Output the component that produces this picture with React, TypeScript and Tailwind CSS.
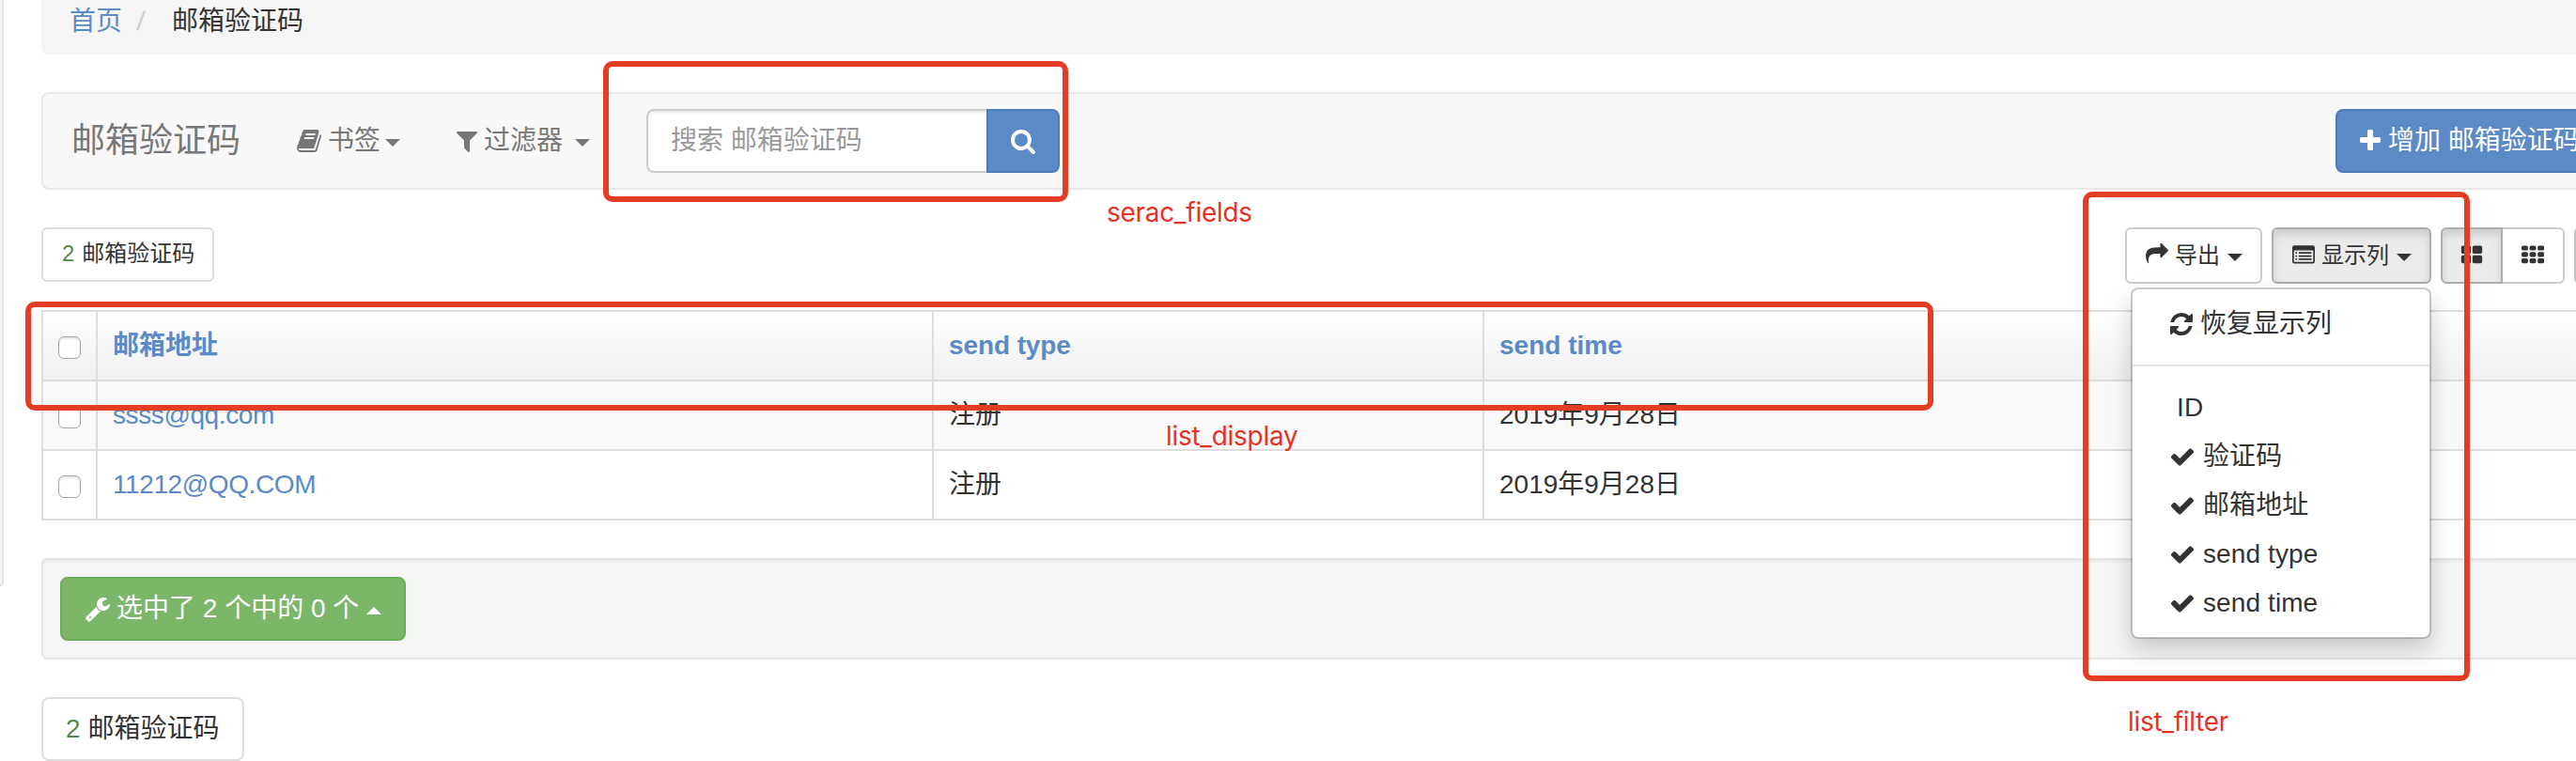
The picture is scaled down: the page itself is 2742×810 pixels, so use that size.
import React from "react";

const paths = {
  book: "M1703 478q40 57 18 129l-275 906q-19 64-76.5 107.5t-122.5 43.5h-923q-77 0-148.5-53.5t-99.5-131.5q-24-67-2-127 0-4 3-27t4-37q1-8-3-21.5t-3-19.5q2-11 8-21t16.5-23.5 16.5-23.5q23-38 45-91.5t30-91.5q3-10 .5-30t-.5-28q3-11 17-28t17-23q21-36 42-92t25-90q1-9-2.5-32t.5-28q4-13 22-30.5t22-22.5q19-26 42.5-84.5t27.5-96.5q1-8-3-25.5t-2-26.5q2-8 9-18t18-23 17-21q8-12 16.5-30.5t15-35 16-36 19.5-32 26.5-23.5 36-11.5 47.5 5.5l-1 3q38-9 51-9h761q74 0 114 56t18 130l-274 906q-36 119-71.5 153.5t-128.5 34.5h-869q-27 0-38 15-11 16-1 43 24 70 144 70h923q29 0 56-15.5t35-41.5l300-987q7-22 5-57 38 15 59 43zm-1064 2q-4 13 2 22.5t20 9.5h608q13 0 25.5-9.5t16.5-22.5l21-64q4-13-2-22.5t-20-9.5h-608q-13 0-25.5 9.5t-16.5 22.5zm-83 256q-4 13 2 22.5t20 9.5h608q13 0 25.5-9.5t16.5-22.5l21-64q4-13-2-22.5t-20-9.5h-608q-13 0-25.5 9.5t-16.5 22.5z",
  filter: "M1595 295q17 41-14 70l-493 493v742q0 42-39 59-13 5-25 5-27 0-45-19l-256-256q-19-19-19-45v-486l-493-493q-31-29-14-70 17-39 59-39h1280q42 0 59 39z",
  search: "M1216 832q0-185-131.5-316.5t-316.5-131.5-316.5 131.5-131.5 316.5 131.5 316.5 316.5 131.5 316.5-131.5 131.5-316.5zm512 832q0 52-38 90t-90 38q-54 0-90-38l-343-342q-179 124-399 124-143 0-273.5-55.5t-225-150-150-225-55.5-273.5 55.5-273.5 150-225 225-150 273.5-55.5 273.5 55.5 225 150 150 225 55.5 273.5q0 220-124 399l343 343q37 37 37 90z",
  plus: "M1600 736v192q0 40-28 68t-68 28h-416v416q0 40-28 68t-68 28h-192q-40 0-68-28t-28-68v-416h-416q-40 0-68-28t-28-68v-192q0-40 28-68t68-28h416v-416q0-40 28-68t68-28h192q40 0 68 28t28 68v416h416q40 0 68 28t28 68z",
  share: "M1792 640q0 26-19 45l-512 512q-19 19-45 19t-45-19-19-45v-256h-224q-98 0-175.5 6t-154 21.5-133 42.5-105.5 69.5-80 101-48.5 138.5-17.5 181q0 55 5 123 0 6 2.5 23.5t2.5 26.5q0 15-8.5 25t-23.5 10q-16 0-28-17-7-9-13-22t-13.5-30-10.5-24q-127-285-127-451 0-199 53-333 162-403 875-403h224v-256q0-26 19-45t45-19 45 19l512 512q19 19 19 45z",
  refresh: "M1639 1056q0 5-1 7-64 268-268 434.5t-478 166.5q-146 0-282.5-55t-243.5-157l-129 129q-19 19-45 19t-45-19-19-45v-448q0-26 19-45t45-19h448q26 0 45 19t19 45-19 45l-137 137q71 66 161 102t187 36q134 0 250-65t186-179q11-17 53-117 8-23 30-23h192q13 0 22.5 9.5t9.5 22.5zm25-800v448q0 26-19 45t-45 19h-448q-26 0-45-19t-19-45 19-45l138-138q-148-137-349-137-134 0-250 65t-186 179q-11 17-53 117-8 23-30 23h-199q-13 0-22.5-9.5t-9.5-22.5v-7q65-268 270-434.5t480-166.5q146 0 284 55.5t245 156.5l130-129q19-19 45-19t45 19 19 45z",
  check: "M1671 566q0 40-28 68l-724 724-136 136q-28 28-68 28t-68-28l-136-136-362-362q-28-28-28-68t28-68l136-136q28-28 68-28t68 28l294 295 656-657q28-28 68-28t68 28l136 136q28 28 28 68z",
  wrench: "M448 1472q0-26-19-45t-45-19-45 19-19 45 19 45 45 19 45-19 19-45zm644-420l-682 682q-37 37-90 37-52 0-91-37l-106-108q-38-36-38-90 0-53 38-91l681-681q39 98 114.5 173.5t173.5 114.5zm634-435q0 39-23 106-47 134-164.5 217.5t-258.5 83.5q-185 0-316.5-131.5t-131.5-316.5 131.5-316.5 316.5-131.5q58 0 121.5 16.5t107.5 46.5q16 11 16 28t-16 28l-293 169v224l193 107q5-3 79-48.5t135.5-81 70.5-35.5q15 0 23.5 10t8.5 25z",
};

type IconName = keyof typeof paths;

function Icon({ name, className = "h-7 w-7" }: { name: IconName; className?: string }) {
  return (
    <svg viewBox="0 0 1792 1792" fill="currentColor" className={`shrink-0 ${className}`}>
      <path d={paths[name]} />
    </svg>
  );
}

function ListIcon() {
  return (
    <svg viewBox="0 0 24 24" fill="currentColor" className="mb-1 mr-[7px] h-6 w-6 shrink-0">
      <path
        fillRule="evenodd"
        d="M2.2 3.2h19.6A2.2 2.2 0 0 1 24 5.4v14.8a2.2 2.2 0 0 1-2.2 2.2H2.2A2.2 2.2 0 0 1 0 20.2V5.4a2.2 2.2 0 0 1 2.2-2.2zM2.2 8.6a.5.5 0 0 0-.5.5v11.1a.5.5 0 0 0 .5.5h19.6a.5.5 0 0 0 .5-.5V9.1a.5.5 0 0 0-.5-.5z"
      />
      {[10.3, 13.7, 17.1].map((y) => (
        <g key={y}>
          <rect x="3.4" y={y} width="1.7" height="1.7" rx=".4" />
          <rect x="6.8" y={y} width="13.7" height="1.7" rx=".4" />
        </g>
      ))}
    </svg>
  );
}

function GridIcon({ n }: { n: 2 | 3 }) {
  const w = n === 2 ? 10.3 : 6.9;
  const h = n === 2 ? 8.6 : 5.2;
  const gx = n === 2 ? 12 : 8.57;
  const gy = n === 2 ? 10.3 : 6.86;
  const cells = Array.from({ length: n * n }, (_, i) => [i % n, Math.floor(i / n)]);
  return (
    <svg viewBox="0 0 24 24" fill="currentColor" className="mb-1 h-6 w-6">
      {cells.map(([c, r]) => (
        <rect key={`${c}-${r}`} x={(n === 2 ? 0.85 : 0) + c * gx} y={3.4 + r * gy} width={w} height={h} rx="1.7" />
      ))}
    </svg>
  );
}

function Caret({ up = false, className = "" }: { up?: boolean; className?: string }) {
  return (
    <span
      className={`inline-block h-0 w-0 shrink-0 border-x-8 border-x-transparent ${up ? "border-b-8" : "border-t-8"} ${className}`}
    />
  );
}

function Checkbox() {
  return (
    <span className="mt-[3px] block h-6 w-6 rounded-[6px] border border-[#a6a6a6] bg-white shadow-[inset_0_2px_2px_rgba(0,0,0,0.1)]" />
  );
}

function Breadcrumb() {
  return (
    <nav className="flex h-[58px] w-[2760px] rounded-b-lg bg-[#f5f5f5] pl-[30px] pt-[3px] leading-10">
      <a className="w-[72px] text-[#5b8ac6]">首页</a>
      <span className="w-[37px] text-[#ccc]">
        <span className="inline-block -skew-x-6">/</span>
      </span>
      <span>邮箱验证码</span>
    </nav>
  );
}

function Navbar() {
  return (
    <header className="mt-10 flex h-[104px] w-[2760px] items-center rounded-lg border-2 border-[#e7e7e7] bg-[#f8f8f8] text-[#777]">
      <span className="ml-[30px] w-[239px] text-[36px]">邮箱验证码</span>
      <div className="flex w-[168px] items-center">
        <Icon name="book" className="mr-[6px] h-7 w-7" />
        书签
        <Caret className="ml-[5px] mt-1" />
      </div>
      <div className="flex w-[205px] items-center">
        <Icon name="filter" className="mr-1 h-7 w-7" />
        过滤器
        <Caret className="ml-[13px] mt-1" />
      </div>
      <div className="flex h-[68px] w-[440px]">
        <div className="flex w-[362px] items-center rounded-l-lg border-2 border-r-0 border-[#ccc] bg-white pl-6 text-[#999] shadow-[inset_0_2px_2px_rgba(0,0,0,0.075)]">
          搜索 邮箱验证码
        </div>
        <button className="flex w-[78px] items-center justify-center rounded-r-lg border-2 border-[#4d7cba] bg-[#5b8ac6] text-white">
          <Icon name="search" />
        </button>
      </div>
      <button className="ml-auto mr-[14px] flex h-[68px] w-[302px] items-center whitespace-nowrap rounded-lg border-2 border-[#4d7cba] bg-[#5b8ac6] pl-[21px] text-white">
        <Icon name="plus" className="mr-[5px] h-7 w-7" />
        增加 邮箱验证码
      </button>
    </header>
  );
}

const columns: [string, boolean][] = [
  ["ID", false],
  ["验证码", true],
  ["邮箱地址", true],
  ["send type", true],
  ["send time", true],
];

function ColumnMenu() {
  return (
    <div className="absolute right-0 top-[64px] z-10 h-[374px] w-[320px] rounded-lg border-2 border-black/20 bg-white bg-clip-padding pt-[11px] text-[28px] shadow-[0_12px_24px_rgba(0,0,0,0.175)]">
      <div className="flex h-[52px] items-center pl-[38px]">
        <Icon name="refresh" className="mr-[6px] h-7 w-7" />
        恢复显示列
      </div>
      <div className="mb-[18px] mt-[17px] h-[2px] bg-[#e5e5e5]" />
      {columns.map(([name, on]) => (
        <div key={name} className="flex h-[52px] items-center pl-[39px] tracking-[0.1px]">
          {on ? <Icon name="check" className="mr-2 h-7 w-7" /> : <span className="w-2" />}
          {name}
        </div>
      ))}
    </div>
  );
}

function ToolButton({ icon, label, active }: { icon: React.ReactNode; label: string; active?: boolean }) {
  return (
    <button
      className={`flex h-full w-full items-center rounded-[6px] border-2 pl-5 ${
        active ? "border-[#adadad] bg-[#ebebeb] shadow-[inset_0_6px_10px_rgba(0,0,0,0.125)]" : "border-[#ccc] bg-white"
      }`}
    >
      {icon}
      {label}
      <Caret className="ml-2 mt-1" />
    </button>
  );
}

function Toolbar() {
  return (
    <div className="mt-10 flex h-[60px] w-[2760px] text-[24px]">
      <Count className="h-[58px] w-[184px] rounded-[6px] pb-[3px] pl-5" />
      <div className="ml-[2034px] h-[60px] w-[146px]">
        <ToolButton icon={<Icon name="share" className="mb-1 mr-[7px] h-6 w-6" />} label="导出" />
      </div>
      <div className="relative ml-[10px] h-[60px] w-[170px]">
        <ToolButton icon={<ListIcon />} label="显示列" active />
        <ColumnMenu />
      </div>
      <div className="ml-[10px] flex h-[60px] w-[132px]">
        <span className="flex w-[66px] items-center justify-center rounded-l-[6px] border-2 border-[#adadad] bg-[#ebebeb] shadow-[inset_0_6px_10px_rgba(0,0,0,0.125)]">
          <GridIcon n={2} />
        </span>
        <span className="flex w-[66px] items-center justify-center rounded-r-[6px] border-2 border-l-0 border-[#ccc] bg-white">
          <GridIcon n={3} />
        </span>
      </div>
      <span className="ml-[10px] w-[20px] rounded-l-[6px] border-2 border-[#bbb] bg-[#ebebeb]" />
    </div>
  );
}

function Count({ className }: { className: string }) {
  return (
    <div className={`flex items-center border-2 border-[#ddd] bg-white ${className}`}>
      <span className="mr-2 text-[#58874c]">2</span>邮箱验证码
    </div>
  );
}

const rows = [
  ["ssss@qq.com", "注册", "2019年9月28日"],
  ["11212@QQ.COM", "注册", "2019年9月28日"],
];

function Results() {
  return (
    <div className="mt-[28px] w-[2760px] border-2 border-b-0 border-[#ddd]">
      <div className="flex h-[74px] border-b-2 border-[#ddd] bg-linear-to-b from-white to-[#f0f0f0] font-bold text-[#5b8ac6]">
        <div className="flex w-[58px] items-center border-r-2 border-[#ddd] pl-4"><Checkbox /></div>
        <div className="flex w-[890px] items-center border-r-2 border-[#ddd] pl-4">邮箱地址</div>
        <div className="flex w-[586px] items-center border-r-2 border-[#ddd] pl-4 tracking-[-0.1px]">send type</div>
        <div className="flex grow items-center pl-4">send time</div>
      </div>
      {rows.map((r, i) => (
        <div key={i} className={`flex h-[74px] border-b-2 border-[#ddd] ${i === 0 ? "bg-[#f9f9f9]" : ""}`}>
          <div className="flex w-[58px] items-center border-r-2 border-[#ddd] pl-4"><Checkbox /></div>
          <div className="flex w-[890px] items-center border-r-2 border-[#ddd] pl-4 tracking-[-0.4px] text-[#5b8ac6]">{r[0]}</div>
          <div className="flex w-[586px] items-center border-r-2 border-[#ddd] pl-4">{r[1]}</div>
          <div className="flex grow items-center pl-4">{r[2]}</div>
        </div>
      ))}
    </div>
  );
}

function Actions() {
  return (
    <div className="mt-10 flex h-[108px] w-[2760px] items-center rounded-[6px] border-2 border-[#e3e3e3] bg-[#f5f5f5] pl-[18px] shadow-[inset_0_2px_2px_rgba(0,0,0,0.05)]">
      <button className="flex h-[68px] w-[368px] items-center whitespace-nowrap rounded-lg border-2 border-[#6bac59] bg-[#7cb668] pl-6 text-white">
        <Icon name="wrench" className="mr-[6px] h-7 w-7" />
        选中了 2 个中的 0 个
        <Caret up className="ml-2 mt-1" />
      </button>
    </div>
  );
}

function Note({ className, children }: { className: string; children: string }) {
  return (
    <span className={`absolute z-20 font-['Inter',sans-serif] text-[28px] tracking-[-0.3px] text-[#e53224] ${className}`}>
      {children}
    </span>
  );
}

export default function App() {
  return (
    <div className="relative flex h-[810px] w-full overflow-hidden bg-white font-['Liberation_Sans','Noto_Sans_CJK_SC',sans-serif] text-[28px] leading-10 text-[#333]">
      <aside className="h-[624px] w-1 shrink-0 rounded-br-[6px] border-b-2 border-r-2 border-[#e3e3e3] bg-[#f5f5f5]" />
      <main className="ml-10 shrink-0">
        <Breadcrumb />
        <Navbar />
        <Toolbar />
        <Results />
        <Actions />
        <Count className="mt-10 h-[68px] w-[216px] rounded-lg pl-6" />
      </main>

      <div className="absolute left-[642px] top-[65px] z-20 h-[150px] w-[495px] rounded-[10px] border-[6px] border-[#e33e23]" />
      <div className="absolute left-[27px] top-[321px] z-20 h-[116px] w-[2031px] rounded-[10px] border-[6px] border-[#e33e23]" />
      <div className="absolute left-[2217px] top-[204px] z-20 h-[521px] w-[412px] rounded-[10px] border-[6px] border-[#e33e23]" />
      <Note className="left-[1178px] top-[206px]">serac_fields</Note>
      <Note className="left-[1241px] top-[444px]">list_display</Note>
      <Note className="left-[2265px] top-[748px]">list_filter</Note>
    </div>
  );
}
